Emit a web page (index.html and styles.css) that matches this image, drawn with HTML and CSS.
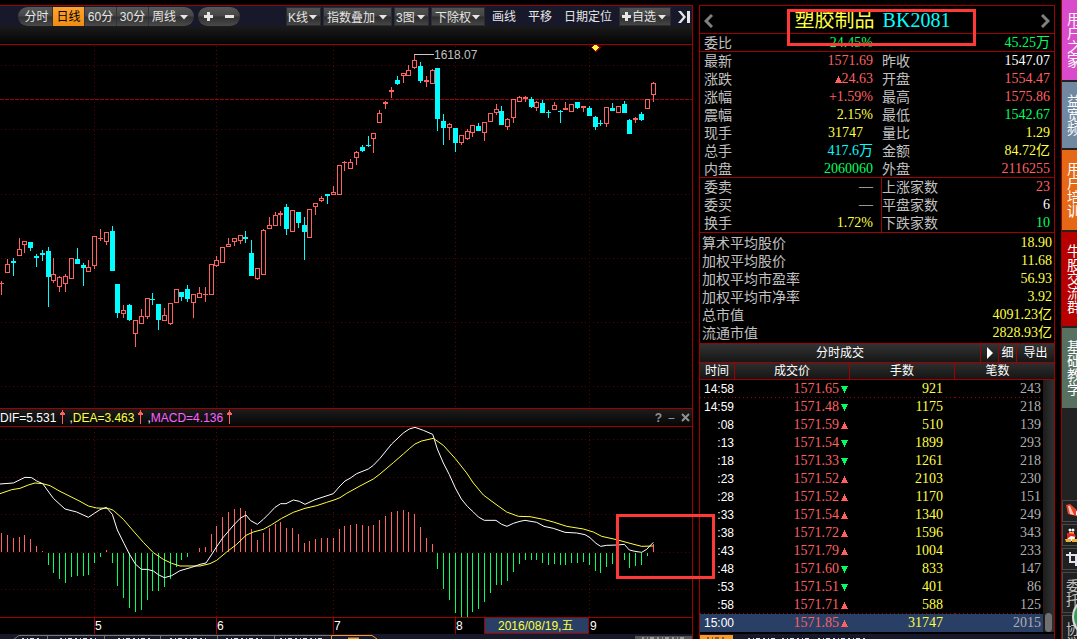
FILE: index.html
```html
<!DOCTYPE html>
<html lang="zh-CN">
<head>
<meta charset="utf-8">
<title>塑胶制品 BK2081</title>
<link rel="stylesheet" href="styles.css">
</head>
<body>
<svg class="defs" aria-hidden="true">
  <symbol id="caret" viewBox="0 0 8 5"><path d="M0 0h8L4 4.5z"/></symbol>
  <symbol id="up" viewBox="0 0 7 7"><path d="M3 0h1v2h1v2h1v2h1v1H0V6h1V4h1V2h1z"/></symbol>
  <symbol id="down" viewBox="0 0 7 7"><path d="M3 7h1V5h1V3h1V1h1V0H0v1h1v2h1v2h1z"/></symbol>
  <symbol id="rise" viewBox="0 0 5 14"><path d="M2 0h1v2h1v1h1v2H3v9H2V5H0V3h1V2h1z"/></symbol>
</svg>
<div class="app">
  <main class="chart">
    <div class="toolbar">
      <div class="pill">
        <button class="seg first">分时</button>
        <button class="seg on">日线</button>
        <button class="seg">60分</button>
        <button class="seg">30分</button>
        <span class="drop last"><select aria-label="周期"><option>周线</option></select><svg class="caret"><use href="#caret"/></svg></span>
      </div>
      <div class="pill zoom">
        <button class="ic" aria-label="放大"><svg viewBox="0 0 9 9"><path d="M3 0h3v3h3v3H6v3H3V6H0V3h3z"/></svg></button>
        <button class="ic" aria-label="缩小"><svg viewBox="0 0 9 9"><path d="M0 3h9v3H0z"/></svg></button>
      </div>
      <div class="tools">
        <span class="drop box k"><select aria-label="K线"><option>K线</option></select><svg class="caret"><use href="#caret"/></svg></span>
        <span class="drop box idx"><select aria-label="指数叠加"><option>指数叠加</option></select><svg class="caret"><use href="#caret"/></svg></span>
        <span class="drop box k"><select aria-label="图数"><option>3图</option></select><svg class="caret"><use href="#caret"/></svg></span>
        <span class="drop box adj"><select aria-label="除权"><option>下除权</option></select><svg class="caret"><use href="#caret"/></svg></span>
        <button class="plain">画线</button>
        <button class="plain">平移</button>
        <button class="plain">日期定位</button>
        <span class="drop box fav"><svg class="plus" viewBox="0 0 9 9"><path d="M3 0h3v3h3v3H6v3H3V6H0V3h3z"/></svg><select aria-label="自选"><option>自选</option></select><svg class="caret"><use href="#caret"/></svg></span>
        <button class="end" aria-label="收起"><svg viewBox="0 0 12 12"><path d="M0 0h3l5 6-5 6H0l5-6z"/><path d="M9 0h3v12H9z"/></svg></button>
      </div>
    </div>
    <div class="shade"></div>
    <svg class="plot" id="price" viewBox="0 45 692 363">
      <path class="grid" d="M94.5 46V408M216.5 46V408M333.5 46V408M455.5 46V408M589.5 46V408"/>
      <path class="grid dim" d="M1 65.5H692M1 129.5H692M1 194.5H692M1 258.5H692M1 322.5H692M1 386.5H692"/>
      <path class="level" d="M0 99.5H692"/>
      <g id="candles"></g>
      <path class="callout" d="M414 54.500H434"/>
      <text class="peak" x="434" y="59">1618.07</text>
      <path class="gem-edge" d="M595.500 42.500l5 5-5 5-5-5z"/>
      <path class="gem" d="M595.500 44l3.500 3.500-3.500 3.500-3.500-3.500z"/>
    </svg>
    <div class="ind">
      <span>DIF=5.531</span><svg class="rise"><use href="#rise"/></svg>
      <span class="dea"><i>,</i>DEA=3.463</span><svg class="rise"><use href="#rise"/></svg>
      <span class="macd"><i>,</i>MACD=4.136</span><svg class="rise"><use href="#rise"/></svg>
      <div class="ind-btns">
        <button class="help">?</button>
        <button aria-label="最小化"><svg viewBox="0 0 6 9"><path d="M0 5h6v1H0z"/></svg></button>
        <button aria-label="关闭"><svg viewBox="0 0 9 9"><path d="M1 1l7 7M8 1L1 8"/></svg></button>
      </div>
    </div>
    <div class="osc">
      <svg class="plot" viewBox="0 427 692 190">
        <path class="grid" d="M94.5 428V617M216.5 428V617M333.5 428V617M455.5 428V617M589.5 428V617"/>
        <path class="grid dim" d="M1 439.5H692M1 477.5H692M1 514.5H692M1 552.5H692M1 589.5H692"/>
        <g id="bars"></g>
        <g transform="translate(0 400) scale(.33333)">
          <polyline class="line dea-line" points="0,281 35,269 60,265 85,255 105,249 128,251 150,257 180,274 210,289 240,304 265,318 290,324 325,325 340,331 370,358 400,393 430,427 460,458 490,478 515,490 540,498 600,498 630,491 650,481 680,456 710,433 738,406 760,396 790,388 815,374 845,355 880,337 915,325 950,317 980,307 1005,299 1020,293 1040,280 1080,258 1120,237 1140,222 1180,188 1210,162 1228,146 1245,132 1265,123 1300,115 1330,136 1366,176 1400,219 1420,249 1450,285 1485,311 1520,336 1555,349 1590,350 1630,358 1660,366 1700,379 1750,387 1780,396 1805,409 1850,419 1890,430 1925,439 1960,438"/>
          <polyline class="line dif-line" points="0,252 40,249 75,232 95,233 110,243 128,251 160,295 195,327 230,336 265,352 283,340 300,329 319,322 337,343 352,390 372,430 388,462 406,492 424,508 442,508 460,513 475,524 493,533 515,527 540,512 575,502 600,493 618,489 634,465 650,440 668,414 686,393 704,372 722,354 738,345 752,362 772,373 790,358 808,340 825,322 842,311 858,311 880,300 898,304 915,313 945,299 1000,281 1020,258 1035,243 1050,235 1070,221 1105,207 1120,196 1140,175 1175,132 1210,99 1228,87 1245,82 1270,91 1298,103 1303,118 1312,147 1330,189 1348,224 1366,264 1384,297 1402,319 1420,336 1435,351 1453,361 1488,361 1505,373 1521,379 1540,370 1560,364 1575,361 1610,367 1632,379 1660,385 1695,397 1730,399 1755,404 1770,413 1788,430 1802,439 1820,436 1853,435 1873,433 1888,450 1905,454 1925,457 1940,448 1960,427"/>
        </g>
      </svg>
      <div class="mark mark-osc"></div>
    </div>
    <svg class="plot axis" viewBox="0 618 692 16">
      <path class="tick" d="M94.5 618V634M216.5 618V634M333.5 618V634M455.5 618V634"/>
      <rect class="date" x="484.5" y="617.5" width="104" height="16"/>
      <text x="95" y="630">5</text><text x="217" y="630">6</text><text x="334" y="630">7</text><text x="456" y="630">8</text>
      <text class="day" x="498" y="630">2016/08/19,五</text><text x="590" y="630">9</text>
    </svg>
    <svg class="tabs" viewBox="0 0 692 5" preserveAspectRatio="xMinYMin slice">
      <path class="tab" d="M14 5l5-3.500H331M47.500 2v3M104.500 2v3M160.500 2v3M217.500 2v3M274.500 2v3"/>
      <path class="bits" d="M22 4.500h18M60 4.500h38M118 4.500h34M170 4.500h36M226 4.500h38M280 4.500h44"/>
      <path class="tab-on" d="M331.500 5V1.500H372l5 3.500"/>
      <path class="fill-on" d="M348 3.500h11V5h-11z"/>
      <path class="fill-gray" d="M635 2h57v3h-57z"/>
      <path class="bits" d="M642 4h44"/>
    </svg>
  </main>

  <section class="quote">
    <header class="title">
      <button aria-label="上一个"><svg viewBox="0 0 9 14"><path d="M8 1L2 7l6 6"/></svg></button>
      <h1>塑胶制品 <b>BK2081</b></h1>
      <button aria-label="下一个"><svg viewBox="0 0 9 14"><path d="M1 1l6 6-6 6"/></svg></button>
      <div class="mark mark-title"></div>
    </header>
    <dl class="ratio"><div><dt>委比</dt><dd class="g">24.45%</dd></div><div><dt></dt><dd class="g">45.25万</dd></div></dl>
    <div class="pair p1">
      <dl>
        <div><dt>最新</dt><dd class="r">1571.69</dd></div>
        <div><dt>涨跌</dt><dd class="r"><svg class="tri"><use href="#up"/></svg>24.63</dd></div>
        <div><dt>涨幅</dt><dd class="r">+1.59%</dd></div>
        <div><dt>震幅</dt><dd class="y">2.15%</dd></div>
        <div><dt>现手</dt><dd class="y in">31747</dd></div>
        <div><dt>总手</dt><dd class="c">417.6万</dd></div>
        <div><dt>内盘</dt><dd class="g">2060060</dd></div>
      </dl>
      <dl>
        <div><dt>昨收</dt><dd>1547.07</dd></div>
        <div><dt>开盘</dt><dd class="r">1554.47</dd></div>
        <div><dt>最高</dt><dd class="r">1575.86</dd></div>
        <div><dt>最低</dt><dd class="g">1542.67</dd></div>
        <div><dt>量比</dt><dd class="y">1.29</dd></div>
        <div><dt>金额</dt><dd class="y">84.72亿</dd></div>
        <div><dt>外盘</dt><dd class="r">2116255</dd></div>
      </dl>
    </div>
    <div class="pair p2">
      <dl>
        <div><dt>委卖</dt><dd>—</dd></div>
        <div><dt>委买</dt><dd>—</dd></div>
        <div><dt>换手</dt><dd class="y">1.72%</dd></div>
      </dl>
      <dl>
        <div><dt>上涨家数</dt><dd class="r">23</dd></div>
        <div><dt>平盘家数</dt><dd>6</dd></div>
        <div><dt>下跌家数</dt><dd class="g">10</dd></div>
      </dl>
    </div>
    <dl class="avg">
      <div><dt>算术平均股价</dt><dd class="y">18.90</dd></div>
      <div><dt>加权平均股价</dt><dd class="y">11.68</dd></div>
      <div><dt>加权平均市盈率</dt><dd class="y">56.93</dd></div>
      <div><dt>加权平均市净率</dt><dd class="y">3.92</dd></div>
      <div><dt>总市值</dt><dd class="y">4091.23亿</dd></div>
      <div><dt>流通市值</dt><dd class="y">2828.93亿</dd></div>
    </dl>
    <div class="deal-bar">
      <h2>分时成交</h2>
      <button class="play" aria-label="展开"><svg viewBox="0 0 6 12"><path d="M0 0l6 6-6 6z"/></svg></button>
      <button class="fine">细</button>
      <button class="export">导出</button>
    </div>
    <div class="deals">
      <table>
        <colgroup><col class="c-time"><col class="c-price"><col class="c-lots"><col></colgroup>
        <thead><tr><th>时间</th><th>成交价</th><th>手数</th><th>笔数</th></tr></thead>
        <tbody>
          <tr class="cut"><td>14:58</td><td>1571.65<svg class="tri dn"><use href="#down"/></svg></td><td>921</td><td>243</td></tr>
          <tr><td>14:59</td><td>1571.48<svg class="tri dn"><use href="#down"/></svg></td><td>1175</td><td>218</td></tr>
          <tr><td>:08</td><td>1571.59<svg class="tri"><use href="#up"/></svg></td><td>510</td><td>139</td></tr>
          <tr><td>:13</td><td>1571.54<svg class="tri dn"><use href="#down"/></svg></td><td>1899</td><td>293</td></tr>
          <tr><td>:18</td><td>1571.33<svg class="tri dn"><use href="#down"/></svg></td><td>1261</td><td>218</td></tr>
          <tr><td>:23</td><td>1571.52<svg class="tri"><use href="#up"/></svg></td><td>2103</td><td>230</td></tr>
          <tr><td>:28</td><td>1571.52<svg class="tri"><use href="#up"/></svg></td><td>1170</td><td>151</td></tr>
          <tr><td>:33</td><td>1571.54<svg class="tri"><use href="#up"/></svg></td><td>1340</td><td>249</td></tr>
          <tr><td>:38</td><td>1571.72<svg class="tri"><use href="#up"/></svg></td><td>1596</td><td>343</td></tr>
          <tr><td>:43</td><td>1571.79<svg class="tri"><use href="#up"/></svg></td><td>1004</td><td>233</td></tr>
          <tr><td>:48</td><td>1571.60<svg class="tri dn"><use href="#down"/></svg></td><td>833</td><td>147</td></tr>
          <tr><td>:53</td><td>1571.51<svg class="tri dn"><use href="#down"/></svg></td><td>401</td><td>86</td></tr>
          <tr class="cut"><td>:58</td><td>1571.71<svg class="tri"><use href="#up"/></svg></td><td>588</td><td>125</td></tr>
          <tr class="sel"><td>15:00</td><td>1571.85<svg class="tri"><use href="#up"/></svg></td><td>31747</td><td>2015</td></tr>
        </tbody>
      </table>
      <div class="scroll"><div class="thumb"></div></div>
    </div>
    <svg class="tabs" viewBox="0 0 354 5" preserveAspectRatio="xMinYMin slice">
      <path class="fill-on" d="M0 1h33v4H0z"/>
      <path class="bits dark" d="M7 4h20"/>
      <path class="bits" d="M48 4.500h28M82 4.500h28M118 4.500h48"/>
    </svg>
  </section>

  <nav class="side">
    <button class="s1"><span>用户之家</span></button>
    <button class="s2"><span>益宽频</span></button>
    <button class="s3"><span>用户培训</span></button>
    <button class="s4"><span>牛股交流群</span></button>
    <button class="s5"><span>基础教学</span></button>
    <div class="rest">
      <button class="tool" aria-label="公告"><svg viewBox="0 0 18 18"><path d="M1 3l4-1 8 7 5 3-2 4-5-2-8-2z" fill="#e8452c"/><path d="M3 4l2 0 4 9-4-1z" fill="#ffc9b5"/><path d="M11 9l4 2-1 3-3-1z" fill="#fff"/></svg></button>
      <button class="tool" aria-label="QQ"><svg viewBox="0 0 18 18"><path d="M3 3q3-4 6 0l1 4 3 5-2 1-1 2H2l-2-3 3-5z" fill="#151515"/><ellipse cx="6" cy="11" rx="4" ry="4" fill="#fff"/><circle cx="5" cy="4" r="1.500" fill="#fff"/><circle cx="8" cy="4" r="1.500" fill="#fff"/><path d="M4 6h5v2H4z" fill="#f5a623"/><path d="M2 7l8 1 1 3-5-1-4 3z" fill="#e5202c"/><path d="M0 13h6v3H1zM7 13h6l-1 3H7z" fill="#f3b12b"/></svg></button>
      <button class="tool" aria-label="截图"><svg viewBox="0 0 18 18"><path d="M5 2v10h9M1 5h10v11" fill="none" stroke="#dde4f0" stroke-width="2"/></svg></button>
      <button class="tool t4"><span>委托</span></button>
      <button class="tool t5"><span>协议</span></button>
      <div class="ball"></div>
    </div>
  </nav>
</div>
<script src="chart.js"></script>
</body>
</html>
```
FILE: styles.css
```css
* { box-sizing: border-box; }
body, h1, h2, dl, dd { margin: 0; }
body {
  background: #000;
  color: #fff;
  font: 12px/18px "Liberation Sans", "Noto Sans CJK SC", sans-serif;
  overflow: hidden;
}
button, select {
  margin: 0;
  padding: 0;
  border: 0;
  background: none;
  color: inherit;
  font: inherit;
}
svg { display: block; fill: currentColor; }
.defs { position: absolute; width: 0; height: 0; }

.app {
  display: grid;
  grid-template-columns: minmax(0, 1fr) 356px 16px;
  column-gap: 6px;
  height: 100vh;
  overflow: hidden;
}

/* chart column */
.chart {
  margin-top: 5px;
  border-top: 1px solid #a00000;
  border-right: 1px solid #a00000;
}
.toolbar {
  display: flex;
  align-items: center;
  height: 20px;
  padding: 1px 2px 0 18px;
  background: #171829;
  color: #e6e6e6;
}
.pill {
  display: flex;
  height: 19px;
  border-radius: 10px;
  overflow: hidden;
  background: linear-gradient(#565656, #464646 48%, #303030 52%, #4a4a4a);
}
.seg { width: 32px; padding-top: 1px; border-left: 1px solid #333; line-height: 18px; }
.seg.first { width: 34px; padding-left: 3px; border: 0; }
.seg.on { background: linear-gradient(#ffa32e, #f08c14); color: #000; }
.drop { position: relative; display: flex; height: 19px; }
.drop select {
  appearance: none;
  width: 100%;
  padding: 1px 0 0 3px;
  line-height: 18px;
  outline: 0;
}
.drop .caret { position: absolute; right: 4px; top: 7px; width: 8px; height: 5px; pointer-events: none; }
.drop.last { width: 46px; border-left: 1px solid #333; }
.drop.last .caret { right: 6px; top: 8px; }
.zoom { width: 42px; margin-left: 4px; padding: 0 6px; align-items: center; justify-content: space-between; }
.ic svg { width: 9px; height: 9px; }
.tools { display: flex; align-items: center; gap: 2px; margin-left: auto; }
.box {
  border: 1px solid #2c2c30;
  background: linear-gradient(#505050, #444 48%, #2c2c2c 52%, #454545);
}
.k { width: 35px; }
.idx { width: 69px; }
.adj { width: 54px; }
.fav { width: 52px; align-items: center; }
.drop.k select { padding-left: 1px; }
.drop.k .caret { right: 3px; }
.plus { width: 9px; height: 9px; margin-left: 2px; flex: none; }
.drop.fav select { padding-left: 1px; }
.plain { padding: 1px 5px 0 5px; line-height: 18px; }
.end { width: 17px; padding-left: 5px; }
.end svg { width: 12px; height: 12px; }
.shade { height: 19px; border-bottom: 1px solid #a00000; background: linear-gradient(#1b1b1b, #040404); }

.plot { width: 100%; height: auto; shape-rendering: crispEdges; }
.grid { fill: none; stroke: #6c0000; stroke-dasharray: 1 3; }
.dim { stroke: #560000; }
.level { stroke: #a00000; stroke-dasharray: 4 1; }
.up { fill: #000; stroke: #ff6060; }
.up-fill { fill: #ff6060; }
.down-fill { fill: #00ffff; }
.loss { fill: #00ff60; }
.callout { stroke: #c8c8c8; }
.peak { fill: #c0c0c0; }
.gem { fill: #ffff40; }
.gem-edge { fill: #a00000; }
.line { fill: none; vector-effect: non-scaling-stroke; shape-rendering: auto; }
.dea-line { stroke: #ffff40; }
.dif-line { stroke: #fff; }
.plot text { font-size: 12px; }

.ind {
  display: flex;
  align-items: center;
  height: 19px;
  border: solid #a00000;
  border-width: 1px 0;
  background: linear-gradient(#1c1c1c, #060606);
}
.ind i { font-style: normal; color: #fff; }
.rise { width: 5px; height: 14px; margin: 0 4px 2px 4px; color: #ff6060; }
.dea { color: #ffff40; }
.macd { color: #ff60ff; }
.ind-btns { display: flex; align-items: center; gap: 5px; margin: 0 2px 0 auto; color: #909090; }
.ind-btns svg { height: 9px; width: 9px; fill: #909090; stroke: #909090; stroke-width: 0; }
.ind-btns button:last-child svg { stroke-width: 2; }
.help { font-weight: bold; }

.osc { position: relative; }
.mark { position: absolute; z-index: 2; border: 3px solid #ff3838; pointer-events: none; }
.mark-osc { right: -23px; top: 87px; width: 99px; height: 65px; }
.axis { border-top: 1px solid #a00000; fill: #fff; }
.tick { stroke: #a00000; }
.date { fill: #2a3f66; stroke: #a00000; }
.day { fill: #ffff40; }
.tabs { width: 100%; height: 5px; background: #171829; }
.tab, .tab-on { fill: none; stroke: #777; }
.tab-on { stroke: #ff9a20; }
.fill-on { fill: #ff9a20; }
.fill-gray { fill: #555; }
.bits { stroke: #ddd; stroke-dasharray: 2 3 1 2 4 3; }
.bits.dark { stroke: #222; }

/* quote column */
.quote {
  margin-top: 5px;
  border: solid #a00000;
  border-width: 1px 1px 0;
}
.title {
  position: relative;
  display: flex;
  align-items: center;
  justify-content: space-between;
  height: 28px;
  padding: 2px 4px 0;
  border-bottom: 1px solid #a00000;
}
.title h1, .title b { font: 20px/24px "Liberation Serif", "Noto Sans CJK SC", serif; }
.title h1 { color: #ffff40; padding-right: 9px; }
.title h1 { margin-bottom: 2px; }
.title b { color: #00ffff; margin-left: 3px; }
.title svg { width: 9px; height: 14px; fill: none; stroke: #808080; stroke-width: 3; }
.mark-title { left: 87px; top: 3px; width: 189px; height: 37px; }

dl > div { display: flex; justify-content: space-between; height: 18px; }
dt { color: #c0c0c0; font-size: 14px; }
dd { font: 14px/18px "Liberation Serif", "Noto Sans CJK SC", serif; }
.r { color: #ff6060; }
.g { color: #00ff60; }
.y { color: #ffff40; }
.c { color: #00ffff; }
.in { padding-right: 10px; }
.ratio, .pair { display: grid; grid-template-columns: 182px minmax(0, 1fr); }
.ratio { height: 18px; border-bottom: 1px solid #a00000; }
.ratio > div, .pair dl > div { padding: 0 4px 0 0; }
.ratio > div:first-child, .pair dl:first-child > div { padding: 0 9px 0 4px; }
.p1 { box-shadow: inset 0 -1px #a00000; }
.p2 { border-bottom: 1px solid #a00000; }
.p2 dl:last-child { border-left: 1px solid #a00000; margin-left: -1px; }
.avg { padding: 1px 2px; border-bottom: 1px solid #a00000; }
.tri { display: inline-block; width: 7px; height: 7px; margin-left: 2px; vertical-align: 0; color: #ff6060; }
.tri.dn { color: #00ff60; }

.deal-bar {
  display: grid;
  grid-template-columns: minmax(0, 1fr) 18px 18px 38px;
  height: 19px;
  border-bottom: 1px solid #a00000;
  background: linear-gradient(#333, #161616);
}
.deal-bar h2 { font: inherit; text-align: center; }
.deal-bar button { border-left: 1px solid #a00000; }
.play svg { width: 6px; height: 12px; margin: 0 auto; }
.deals { position: relative; }
table { width: 100%; table-layout: fixed; border-spacing: 0; font: 14px/18px "Liberation Serif", serif; }
.c-time { width: 35px; }
.c-price { width: 115px; }
.c-lots { width: 105px; }
th {
  height: 17px;
  padding: 1px 0 0;
  border-bottom: 1px solid #a00000;
  border-right: 1px solid #a00000;
  background: linear-gradient(#2e2e2e, #161616);
  font: 12px/15px "Liberation Sans", "Noto Sans CJK SC", sans-serif;
}
th:last-child { border-right: 0; padding-right: 14px; }
td { height: 18px; padding: 0; text-align: right; line-height: 18px; }
td:nth-child(1) { padding-right: 1px; font-family: "Liberation Sans", sans-serif; font-size: 12px; }
td:nth-child(2) { padding-right: 2px; color: #ff6060; }
td:nth-child(3) { padding-right: 12px; color: #ffff40; }
td:nth-child(4) { padding-right: 13px; color: #b0b0b0; }
.cut td { background: repeating-linear-gradient(90deg, #a00000 0 1px, transparent 1px 4px) bottom / 100% 1px no-repeat; }
.sel td { background: #2a3f66; }
.scroll { position: absolute; right: 0; top: 17px; bottom: 0; width: 11px; background: linear-gradient(90deg, #1c1c1c, #303030); }
.thumb { position: absolute; left: 2px; right: 2px; bottom: 0; height: 19px; border-radius: 4px; background: #707070; }
.quote .tabs { margin-top: 2px; }

/* side strip */
.side {
  display: flex;
  flex-direction: column;
  gap: 2px;
  border-left: 1px solid #a00000;
  background: #222;
  overflow: hidden;
}
.side button { display: flex; align-items: center; flex: none; width: 28px; padding-left: 5px; }
.side span { width: 14px; font-size: 14px; line-height: 14px; word-break: break-all; }
.s1 { height: 80px; background: #d94bca; }
.s2 { height: 66px; background: #7088a0; }
.s3 { height: 80px; background: #e66814; }
.s4 { height: 94px; background: #b80000; }
.s5 { height: 80px; background: #587060; }
.rest { position: relative; display: flex; flex-direction: column; gap: 2px; margin-top: 90px; }
.rest .tool { height: 22px; padding-left: 2px; border: 1px solid #484848; background: #202020; color: #c0c0c0; }
.tool svg { flex: none; width: 18px; height: 18px; }
.rest .t4 { height: 41px; padding-left: 3px; }
.rest .t5 { height: 41px; padding-left: 3px; }
.ball { position: absolute; left: 10px; top: 96px; width: 42px; height: 42px; border: 2px solid #d8d8d8; border-radius: 50%; background: #30a050; }
```
FILE: chart.js
```javascript
// Each candle: x, high, body top, body bottom, low, 1 = rising / 0 = falling
const candles = [
[1,281,283,284,295,1],[7,259,264,273,273,1],[13,258,261,263,276,0],[19,238,249,256,256,1],[24,241,241,245,253,1],
[30,242,242,248,251,0],[36,254,256,258,267,0],[42,250,253,255,261,0],[48,247,251,277,307,0],[53,258,274,281,283,1],
[59,276,277,287,292,1],[65,274,276,284,292,1],[71,258,258,279,279,1],[77,248,259,264,264,0],[83,263,265,268,286,0],
[88,260,267,272,272,1],[94,236,236,266,269,1],[100,229,238,239,241,1],[106,232,232,242,245,1],[112,226,231,271,271,0],
[117,284,284,313,318,0],[123,305,310,314,318,1],[129,304,305,320,321,0],[135,320,320,334,347,1],[141,309,316,324,324,1],
[147,298,298,317,319,1],[152,293,299,300,305,0],[158,304,304,320,330,0],[164,308,315,321,321,1],[170,303,303,324,325,1],
[176,289,289,303,303,1],[181,292,292,297,301,0],[187,285,289,299,302,0],[193,294,294,303,318,1],[199,287,293,298,298,1],
[205,287,294,295,302,1],[211,264,264,295,295,1],[216,256,260,266,267,1],[222,247,247,263,263,1],[228,238,244,247,247,1],
[234,238,238,242,246,1],[240,235,235,241,244,1],[245,231,237,239,243,0],[251,240,253,276,276,0],[257,268,268,279,280,1],
[263,229,230,275,275,1],[269,217,225,229,229,1],[275,212,215,226,226,1],[280,211,213,215,226,1],[286,204,207,229,235,0],
[292,210,210,232,232,1],[298,212,212,223,228,0],[304,217,225,232,260,0],[309,209,209,238,238,1],[315,203,203,207,215,1],
[321,196,198,201,202,1],[327,194,194,196,204,0],[333,186,192,195,195,1],[339,165,165,195,195,1],[344,161,162,163,171,1],
[350,159,162,169,169,1],[356,151,152,158,165,1],[362,145,147,151,152,0],[368,136,145,146,147,0],[373,133,133,139,153,1],
[379,110,113,123,123,1],[385,101,102,104,109,1],[391,87,90,92,98,1],[397,76,80,84,85,0],[403,73,73,76,83,1],
[408,65,70,76,76,1],[414,54,60,68,69,1],[420,62,66,81,83,0],[426,76,80,82,87,1],[432,69,70,84,84,1],
[437,68,68,119,131,0],[443,114,121,128,145,0],[449,123,124,128,140,1],[455,128,128,143,152,0],[461,135,135,143,145,1],
[467,129,131,139,140,1],[472,125,125,133,137,1],[478,123,126,131,131,0],[484,122,122,133,141,1],[490,113,113,122,122,1],
[496,104,109,113,115,1],[501,106,111,125,125,0],[507,118,119,127,130,1],[513,99,99,118,123,1],[519,96,97,102,102,1],
[525,96,97,99,102,1],[531,97,99,107,108,0],[536,101,102,108,111,1],[542,100,103,113,113,0],[548,110,112,113,118,0],
[554,102,105,110,110,1],[560,110,111,112,123,0],[565,102,108,110,110,1],[571,104,104,112,112,1],[577,102,102,108,109,0],
[583,106,106,108,112,1],[589,106,108,116,116,0],[595,116,117,127,130,0],[600,120,123,124,126,0],[606,107,107,124,127,1],
[612,103,108,111,111,0],[618,106,106,113,113,1],[624,101,104,113,113,0],[629,119,120,134,134,0],[635,117,118,120,123,1],
[641,112,114,120,121,0],[647,99,99,109,109,1],[653,82,83,95,102,1]
];

// End point of each histogram bar, measured against the zero line
const zero = 552;
const ends = [
533,535,538,537,535,539,546,551,565,573,579,583,577,576,576,575,563,557,550,563,586,598,608,612,610,600,591,591,587,579,
567,560,557,552,548,547,534,526,517,512,509,508,511,529,540,533,528,524,522,528,528,534,543,541,539,538,538,538,529,526,
525,524,525,526,525,520,516,512,511,510,512,514,527,538,544,569,589,600,613,617,617,612,609,602,593,585,585,581,572,564,
560,560,560,563,565,564,565,565,563,563,562,565,571,573,567,564,565,560,568,566,565,556,544
];

function rect(parent, cls, x, y, w, h) {
  const node = document.createElementNS("http://www.w3.org/2000/svg", "rect");
  node.setAttribute("class", cls);
  node.setAttribute("x", x);
  node.setAttribute("y", y);
  node.setAttribute("width", w);
  node.setAttribute("height", h);
  parent.appendChild(node);
}

const priceLayer = document.getElementById("candles");
const barLayer = document.getElementById("bars");

candles.forEach(([x, high, top, bottom, low, rising], i) => {
  rect(priceLayer, rising ? "up-fill" : "down-fill", x, high, 1, low - high);
  if (rising && bottom - top > 2) {
    rect(priceLayer, "up", x - 1.5, top + 0.5, 4, bottom - top - 1);
  } else {
    rect(priceLayer, rising ? "up-fill" : "down-fill", x - 2, top, 5, bottom - top);
  }
  const end = ends[i];
  if (end < zero) rect(barLayer, "up-fill", x, end, 1, zero - end);
  if (end > zero) rect(barLayer, "loss", x, zero + 1, 1, end - zero - 1);
});
```
